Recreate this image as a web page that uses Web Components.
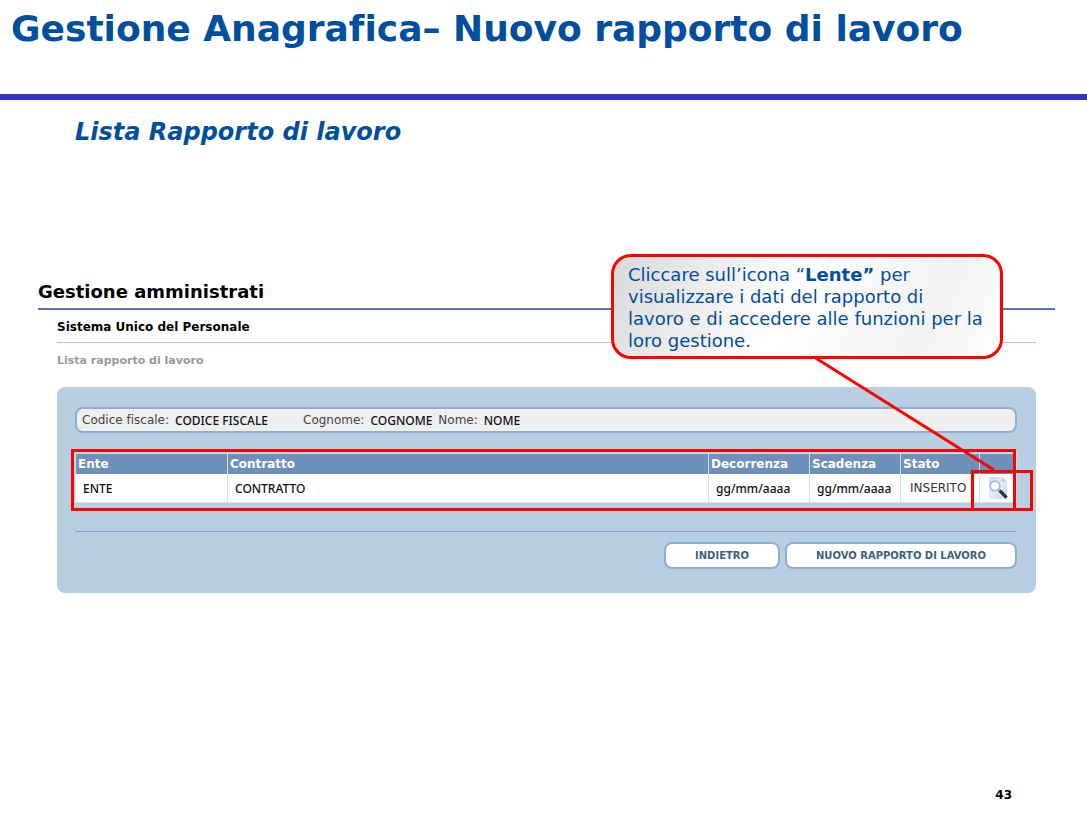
<!DOCTYPE html>
<html lang="it">
<head>
<meta charset="utf-8">
<title>Gestione Anagrafica – Nuovo rapporto di lavoro</title>
<style>
  body { margin: 0; background: #fff; font-family: "DejaVu Sans", Verdana, sans-serif; font-variant-ligatures: none; color: #000; }
</style>
</head>
<body>
<slide-page>
  <slide-header slot="header">Gestione Anagrafica– Nuovo rapporto di lavoro</slide-header>
  <slide-subtitle>Lista Rapporto di lavoro</slide-subtitle>
  <admin-screen>
    <person-bar></person-bar>
    <contract-table></contract-table>
    <action-bar>
      <pill-button>INDIETRO</pill-button>
      <pill-button wide>NUOVO RAPPORTO DI LAVORO</pill-button>
    </action-bar>
    <help-callout slot="callout">
      <span>Cliccare sull’icona “<b>Lente”</b> per</span>
      <span>visualizzare i dati del rapporto di</span>
      <span>lavoro e di accedere alle funzioni per la</span>
      <span>loro gestione.</span>
    </help-callout>
  </admin-screen>
  <span slot="number">43</span>
</slide-page>

<script>
const define = (name, html) => {
  const template = document.createElement('template');
  template.innerHTML = html;
  customElements.define(name, class extends HTMLElement {
    constructor() {
      super();
      this.attachShadow({ mode: 'open' }).append(template.content.cloneNode(true));
    }
  });
};

define('slide-page', `
  <style>
    :host { display: flex; flex-direction: column; min-height: 100vh; }
    main { flex: 1; }
    footer { padding: 0 75px 12px 0; text-align: right; font-size: 12px; font-weight: bold; line-height: 16px; }
  </style>
  <slot name="header"></slot>
  <main><slot></slot></main>
  <footer><slot name="number"></slot></footer>`);

define('slide-header', `
  <style>
    :host { display: block; border-bottom: 6px solid #3333cc; padding: 7px 11px 43px; }
    h1 { margin: 0; font-size: 36px; line-height: 44px; color: #004f9e; white-space: nowrap; }
  </style>
  <h1><slot></slot></h1>`);

define('slide-subtitle', `
  <style>
    :host { display: block; padding: 16px 75px 132px; }
    h2 { margin: 0; font-size: 24px; line-height: 32px; font-style: italic; color: #004f9e; }
  </style>
  <h2><slot></slot></h2>`);

define('admin-screen', `
  <style>
    :host { display: block; position: relative; margin: 0 32px 0 38px; }
    h3 { margin: 0; padding-bottom: 4px; font-size: 18px; line-height: 24px; border-bottom: 2px solid #5b76ae; }
    .body { padding: 0 19px; }
    h4 { margin: 0; padding: 9px 0 7px; font-size: 12px; line-height: 16px; border-bottom: 1px solid #a9c3e6; }
    h5 { margin: 0; padding: 10px 0 18px; font-size: 11px; line-height: 16px; color: #999; }
    section { background: #b8cfe3; border-radius: 8px; padding: 20px 19px 24px 18px; }
  </style>
  <h3>Gestione amministrati</h3>
  <div class="body">
    <h4>Sistema Unico del Personale</h4>
    <h5>Lista rapporto di lavoro</h5>
    <section><slot></slot></section>
  </div>
  <slot name="callout"></slot>`);

define('person-bar', `
  <style>
    :host { display: block; }
    dl { display: flex; margin: 0; padding: 1px 4px 0 5px; border: 2px solid #8eadd2; border-radius: 8px;
         background: #efefef; font-size: 12px; line-height: 21px; color: #444; }
    div { display: flex; gap: 6px; margin-right: 6px; }
    div:first-child { margin-right: 35px; }
    dd { margin: 0; font-family: "Noto Sans", sans-serif; font-size: 12px; font-weight: 500; color: #111; }
  </style>
  <dl>
    <div><dt>Codice fiscale:</dt><dd>CODICE FISCALE</dd></div>
    <div><dt>Cognome:</dt><dd>COGNOME</dd></div>
    <div><dt>Nome:</dt><dd>NOME</dd></div>
  </dl>`);

define('contract-table', `
  <style>
    :host { display: block; position: relative; margin: 20px 0 28px; }
    table { width: 100%; border-collapse: separate; border-spacing: 0; table-layout: fixed; border: 1px solid #d4e2f0; box-sizing: border-box; }
    .ente { width: 151px; } .data { width: 101px; } .scad { width: 91px; } .stato { width: 79px; } .icona { width: 37px; }
    th { padding: 0 2px; height: 20px; background: #6c90ba; color: #fff; font-size: 12px; line-height: 20px; text-align: left; white-space: nowrap; }
    td { padding: 1px 6px 0 7px; height: 27px; background: #fff; font-family: "Noto Sans", sans-serif; font-size: 12px; font-weight: 500; line-height: 27px; color: #111; white-space: nowrap; }
    th, td { border-left: 1px solid #d4e2f0; }
    th:first-child, td:first-child { border-left: 0; }
    td.state { padding: 0 9px; font-family: "DejaVu Sans", sans-serif; font-weight: normal; color: #333; }
    td.view { padding: 0 8px; }
    button { display: block; padding: 0; border: 0; background: none; }
    svg { display: block; }
    .row, .lens { position: absolute; border: 3px solid #f00; pointer-events: none; box-sizing: border-box; }
    .row { inset: -4px 1px -8px -4px; }
    .lens { top: 17px; right: -16px; bottom: -8px; width: 62px; }
  </style>
  <table>
    <colgroup><col class="ente"><col><col class="data"><col class="scad"><col class="stato"><col class="icona"></colgroup>
    <thead><tr><th>Ente</th><th>Contratto</th><th>Decorrenza</th><th>Scadenza</th><th>Stato</th><th></th></tr></thead>
    <tbody><tr>
      <td>ENTE</td><td>CONTRATTO</td><td>gg/mm/aaaa</td><td>gg/mm/aaaa</td><td class="state">INSERITO</td>
      <td class="view"><button type="button" aria-label="Visualizza">
        <svg width="20" height="24" viewBox="0 0 20 24">
          <defs><linearGradient id="p" x1="0" y1="0" x2="1" y2="1"><stop offset="0" stop-color="#c3dbfa"/><stop offset="0.5" stop-color="#e2eefd"/><stop offset="1" stop-color="#b9d5f8"/></linearGradient></defs>
          <path d="M1 1H14L19 6V23H1Z" fill="url(#p)"/>
          <path d="M14 1V6H19Z" fill="#b4d1f6"/>
          <path d="M12.5 15.5L17.5 20.5" stroke="#333" stroke-width="3.2" stroke-linecap="square"/>
          <path d="M10 13L12 15" stroke="#999" stroke-width="2"/>
          <circle cx="7" cy="10" r="4.8" fill="#f7fbff" stroke="#adb2ba" stroke-width="1.5"/>
        </svg></button></td>
    </tr></tbody>
  </table>
  <div class="row"></div><div class="lens"></div>`);

define('action-bar', `
  <style>
    :host { display: flex; justify-content: flex-end; gap: 5px; padding-top: 11px;
            background: repeating-linear-gradient(90deg, #6487c6 0 1px, #a3bbdb 1px 2px) top / 100% 1px no-repeat; }
  </style>
  <slot></slot>`);

define('pill-button', `
  <style>
    :host { display: block; width: 116px; }
    :host([wide]) { width: 232px; }
    button { display: block; width: 100%; height: 27px; padding: 0; border: 2px solid #8eadd2; border-radius: 8px; background: #fff;
             font: bold 10px/16px "DejaVu Sans", Verdana, sans-serif; color: #3d5f7d; white-space: nowrap; }
  </style>
  <button type="button"><slot></slot></button>`);

define('help-callout', `
  <style>
    :host { display: block; position: absolute; top: -26px; right: 52px; width: 392px; }
    .bubble { padding: 7px 12px 4px 14px; border: 3px solid #f00; border-radius: 20px;
        background: linear-gradient(115deg, #d9d9d9 0%, #fff 45%, #f8f8f8 65%, #f2f2f2 80%, #fff 100%);
        font-size: 18px; line-height: 22px; color: #004f9e; }
    ::slotted(span) { display: block; white-space: nowrap; }
    svg { position: absolute; left: 203px; top: 100%; display: block; overflow: visible; }
  </style>
  <div class="bubble"><slot></slot></div>
  <svg width="180" height="112" viewBox="0 0 180 112" aria-hidden="true"><path d="M0 -2L180 111" stroke="#f00" stroke-width="3" fill="none"/></svg>`);
</script>
</body>
</html>
